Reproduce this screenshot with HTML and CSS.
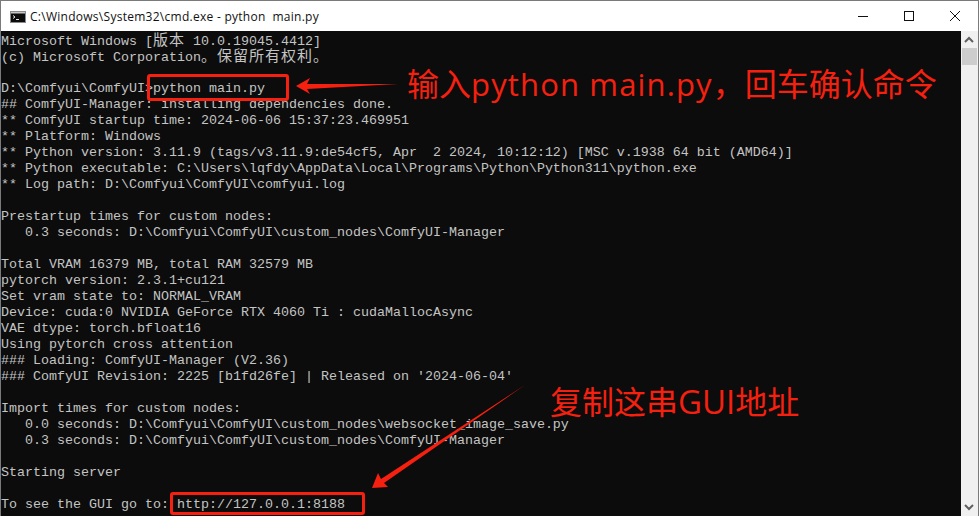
FILE: index.html
```html
<!DOCTYPE html>
<html lang="zh-CN">
<head>
<meta charset="utf-8">
<title>cmd</title>
<link rel="stylesheet" href="styles.css">
</head>
<body>
<div class="window">
  <header class="titlebar">
    <svg class="app-icon" width="16" height="12" viewBox="0 0 16 12"><rect x="0.5" y="0.5" width="15" height="11" fill="#0c0c0c" stroke="#8a8a8a"/><rect x="1" y="1" width="14" height="1.5" fill="#c8c8c8"/><path d="M3 4.5l2 1.5-2 1.5M6 8.5h3" fill="none" stroke="#e8e8e8" stroke-width="1"/></svg>
    <span class="title">C:\Windows\System32\cmd.exe - python  main.py</span>
    <div class="controls">
      <svg class="ctl" width="46" height="30" viewBox="0 0 46 30"><path d="M18 15.5h10" stroke="#111" fill="none"/></svg>
      <svg class="ctl" width="46" height="30" viewBox="0 0 46 30"><rect x="18.5" y="10.5" width="9" height="9" stroke="#111" fill="none"/></svg>
      <svg class="ctl" width="46" height="30" viewBox="0 0 46 30"><path d="M18 10l10 10M28 10l-10 10" stroke="#111" fill="none"/></svg>
    </div>
  </header>
  <div class="client">
    <main class="console">
      <div class="line line-cjk">Microsoft Windows [<span class="cjk">版本</span> 10.0.19045.4412]</div>
      <div class="line line-cjk">(c) Microsoft Corporation<span class="cjk">。保留所有权利。</span></div>
      <div class="line"></div>
      <div class="line">D:\Comfyui\ComfyUI&gt;python main.py</div>
      <div class="line">## ComfyUI-Manager: installing dependencies done.</div>
      <div class="line">** ComfyUI startup time: 2024-06-06 15:37:23.469951</div>
      <div class="line">** Platform: Windows</div>
      <div class="line">** Python version: 3.11.9 (tags/v3.11.9:de54cf5, Apr  2 2024, 10:12:12) [MSC v.1938 64 bit (AMD64)]</div>
      <div class="line">** Python executable: C:\Users\lqfdy\AppData\Local\Programs\Python\Python311\python.exe</div>
      <div class="line">** Log path: D:\Comfyui\ComfyUI\comfyui.log</div>
      <div class="line"></div>
      <div class="line">Prestartup times for custom nodes:</div>
      <div class="line">   0.3 seconds: D:\Comfyui\ComfyUI\custom_nodes\ComfyUI-Manager</div>
      <div class="line"></div>
      <div class="line">Total VRAM 16379 MB, total RAM 32579 MB</div>
      <div class="line">pytorch version: 2.3.1+cu121</div>
      <div class="line">Set vram state to: NORMAL_VRAM</div>
      <div class="line">Device: cuda:0 NVIDIA GeForce RTX 4060 Ti : cudaMallocAsync</div>
      <div class="line">VAE dtype: torch.bfloat16</div>
      <div class="line">Using pytorch cross attention</div>
      <div class="line">### Loading: ComfyUI-Manager (V2.36)</div>
      <div class="line">### ComfyUI Revision: 2225 [b1fd26fe] | Released on '2024-06-04'</div>
      <div class="line"></div>
      <div class="line">Import times for custom nodes:</div>
      <div class="line">   0.0 seconds: D:\Comfyui\ComfyUI\custom_nodes\websocket_image_save.py</div>
      <div class="line">   0.3 seconds: D:\Comfyui\ComfyUI\custom_nodes\ComfyUI-Manager</div>
      <div class="line"></div>
      <div class="line">Starting server</div>
      <div class="line"></div>
      <div class="line">To see the GUI go to: http://127.0.0.1:8188</div>
    </main>
    <aside class="scrollbar">
      <svg width="16" height="17" viewBox="0 0 16 17"><path d="M4 11l4-4 4 4" fill="none" stroke="#606060" stroke-width="2"/></svg>
      <div class="thumb"></div>
      <svg class="down" width="16" height="17" viewBox="0 0 16 17"><path d="M4 6l4 4 4-4" fill="none" stroke="#606060" stroke-width="2"/></svg>
    </aside>
  </div>
  <div class="box box-cmd"></div>
  <div class="box box-url"></div>
  <svg class="arrows" width="979" height="516" viewBox="0 0 979 516">
    <polygon points="296,86 310,78 307,84 398,84 307,89 310,94" fill="#f5200f"/>
    <polygon points="372,488 378,473 381,479 525,385 384,483 388,487" fill="#f5200f"/>
  </svg>
  <div class="note note-cmd">输入<span class="latin-cmd">python main.py</span>，回车确认命令</div>
  <div class="note note-url">复制这串<span class="latin-url">GUI</span>地址</div>
</div>
</body>
</html>
```
FILE: styles.css
```css
html, body {
  margin: 0;
  padding: 0;
  background: #0c0c0c;
}
.window {
  position: relative;
  width: 979px;
  height: 516px;
  box-sizing: border-box;
  border: 1px solid #7a7a7a;
  border-bottom: 0;
  display: flex;
  flex-direction: column;
  overflow: hidden;
  background: #fff;
}
.titlebar {
  height: 30px;
  flex: none;
  display: flex;
  align-items: center;
  background: #fff;
  padding-left: 9px;
}
.app-icon {
  flex: none;
  margin-right: 4px;
  margin-top: 1px;
}
.title {
  font: 12px "Open Sans", "Noto Sans", sans-serif;
  white-space: pre;
  color: #111;
  letter-spacing: 0.27px;
}
.controls {
  margin-left: auto;
  display: flex;
  flex: none;
}
.ctl {
  display: block;
}
.client {
  flex: 1;
  display: flex;
  min-height: 0;
}
.console {
  flex: 1;
  min-width: 0;
  background: #0c0c0c;
  padding-top: 2px;
  color: #c4c4c4;
  font: 13.33px/16px "Liberation Mono", "Noto Sans CJK SC", monospace;
  overflow: hidden;
}
.line {
  height: 16px;
  white-space: pre;
}
.line-cjk {
  box-sizing: border-box;
  padding-top: 1px;
}
.cjk {
  font: 15px/0 "Noto Sans CJK SC", sans-serif;
  letter-spacing: 1px;
}
.scrollbar {
  width: 17px;
  flex: none;
  background: #f0f0f0;
  display: flex;
  flex-direction: column;
}
.scrollbar svg {
  flex: none;
  display: block;
}
.thumb {
  width: 15px;
  height: 17px;
  background: #cdcdcd;
  margin-left: 1px;
}
.down {
  margin-top: auto;
}
.box {
  position: absolute;
  border: 3px solid #f5200f;
  border-radius: 3px;
  box-sizing: border-box;
}
.box-cmd {
  left: 146px;
  top: 73px;
  width: 142px;
  height: 27px;
}
.box-url {
  left: 169px;
  top: 491px;
  width: 195px;
  height: 23px;
}
.arrows {
  position: absolute;
  left: -1px;
  top: -1px;
}
.note {
  position: absolute;
  color: #f5200f;
  font: 32px/40px "Noto Sans CJK SC", sans-serif;
  white-space: pre;
}
.note-cmd {
  left: 406px;
  top: 61px;
}
.note-url {
  left: 549px;
  top: 379px;
}
.latin-cmd {
  font-family: "Open Sans", "Noto Sans", sans-serif;
  font-size: 31px;
  letter-spacing: 1.15px;
}
.latin-url {
  font-family: "Open Sans", "Noto Sans", sans-serif;
  font-size: 33px;
}
```
